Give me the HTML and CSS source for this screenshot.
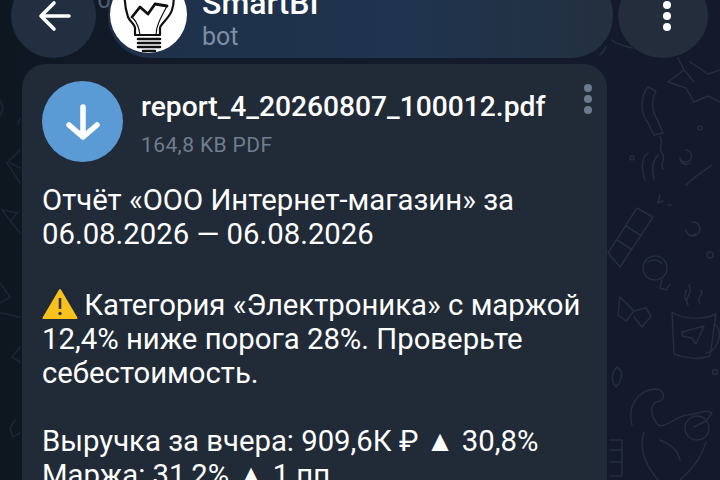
FILE: index.html
```html
<!DOCTYPE html>
<html lang="en">
<head>
  <meta charset="UTF-8" />
  <title>SmartBI</title>
  <link rel="stylesheet" href="styles.css">
</head>
<body>
  <!-- chat wallpaper doodles -->
  <svg class="wallpaper" width="720" height="480" viewBox="0 0 720 480" fill="none" stroke="#262d40" stroke-width="1.5" stroke-linecap="round" stroke-linejoin="round">
    <path d="M612 40c4 4 12 6 20 8M600 55c4-3 4-6 6-8" />
    <path d="M678 58l6 12-16 12 18 6 8 14 14-6 12 6M690 62l18 12 12-4M684 70l10 12" />
    <path d="M648 87c-8 10-8 26 0 36l6 12 9-2-6-14c-5-8-6-18-1-28z" />
    <path d="M660 137c5 6-3 10 2 16s-3 10 1 16" />
    <path d="M648 153c-8 6-6 18-3 27M658 155c-6 6-6 16-4 24" />
    <path d="M686 150a6 6 0 1 1-6 8c0 5 6 8 10 5" />
    <circle cx="700" cy="128" r="2" />
    <circle cx="632" cy="158" r="2" />
    <path d="M712 165c-8 6-16 10-26 20" />
    <path d="M608 253l29-45 16 9-33 50zM617 240l14 9M626 226l14 9" />
    <path d="M660 195l-2 8 5-2M668 205h3" />
    <path d="M692 222a7 7 0 1 1-6 8c0 5 8 7 10 3" />
    <circle cx="710" cy="255" r="3" />
    <circle cx="655" cy="268" r="12" />
    <path d="M662 280l-2 8 6 2 4-6M648 262c4-3 10-3 14 2" />
    <path d="M620 297l14 14-8 10-8-6zM634 311l12-3 5 8-9 11-8-10" />
    <path d="M672 312c12 8 30 8 44 2l-6 42c-10 4-26 2-36-2zM714 325c8 0 8 25-8 28" />
    <path d="M682 332l22-6-8 18-4-6-10-2z" />
    <path d="M688 305c-5-8 6-10 1-20M700 303c-5-6 5-8 1-13M686 300c-3-4 0-7 0-10" />
    <path d="M617 367c-6 6-6 14-1 20 6-6 8-16 1-20z" />
    <circle cx="715" cy="372" r="2.500" />
    <path d="M632 425c-5-18 5-34 22-36 10 0 12 8 6 12-12 2-10 14-2 24 8 4 18-10 30-10 14-2 18-6 24-2l-6 8-12 6" />
    <circle cx="697" cy="428" r="12" />
    <path d="M644 432c-6 18 4 36 14 48M706 442c-4 14-12 26-26 38M660 440c10 4 18 10 20 20" />
    <path d="M610 440h12v36h-12M610 450h12M610 462h12" />
    <path d="M20 150 7 163l13 20M20 168 10 163" stroke="#1d2632" />
    <path d="M2 210l18 23M2 210l16 3M10 222l8-10" stroke="#1d2632" />
    <path d="M0 283l10 14-10 6M0 313c8 0 14 4 20 4M20 347l-8 10 8 5M15 420l-5 8 3 9 7-4" stroke="#1d2632" />
    <path d="M0 100l3 8-3 8M20 118l-2 6" stroke="#1d2632" />
  </svg>

  <header class="topbar">
    <button class="round-btn" aria-label="Back">
      <svg width="36" height="36" viewBox="0 0 36 36" fill="none" stroke="#fff" stroke-width="3.600" stroke-linecap="round" stroke-linejoin="round">
        <path d="M33 18H5M18 5 5 18l13 13" />
      </svg>
    </button>
    <span class="behind-count">0</span>
    <div class="chat-pill">
      <div class="avatar">
        <svg width="77" height="77" viewBox="0 0 77 77" fill="none" stroke="#111" stroke-width="2.200" stroke-linecap="round" stroke-linejoin="round">
          <path d="M15 14c-1 10 0 18 3 27 2 5 7 7 7 11v7h25v-7c0-4 9-9 12-18 2-6 2-14 1-20" />
          <path d="M22 41l8-10 8 7 7-10 12 2" stroke-width="2.800" />
          <path d="M30 59c-1-6-2-12-8-18M46 59c0-8 3-14 11-29" stroke-width="1.200" />
          <path d="M28 63h22M28 67h22M28 71h22M33 75h12" stroke-width="2.600" />
        </svg>
      </div>
      <div class="chat-title">
        <span class="chat-name">SmartBI</span>
        <span class="chat-status">bot</span>
      </div>
    </div>
    <button class="round-btn round-btn-more" aria-label="More">
      <span class="dots"><i></i><i></i><i></i></span>
    </button>
  </header>

  <main class="bubble">
    <div class="file-row">
      <div class="download">
        <svg width="36" height="36" viewBox="0 0 36 36" fill="none" stroke="#fff" stroke-width="5.500" stroke-linecap="round" stroke-linejoin="round">
          <path d="M18 3v30M4 21l14 12 14-12" />
        </svg>
      </div>
      <div class="file-info">
        <div class="file-name">report_4_20260807_100012.pdf</div>
        <div class="file-size">164,8 KB PDF</div>
      </div>
      <span class="dots dots-file"><i></i><i></i><i></i></span>
    </div>
    <p class="msg">Отчёт «ООО Интернет-магазин» за<br>06.08.2026 — 06.08.2026</p>
    <p class="msg msg-alert"><svg class="warn" width="36" height="32" viewBox="0 0 36 32"><path d="M18 2 34.500 30H1.500z" fill="#f9c21d" stroke="#f9c21d" stroke-width="2" stroke-linejoin="round"/><path d="M18 10v11" stroke="#333" stroke-width="2.600"/><circle cx="18" cy="25.500" r="1.700" fill="#333"/></svg> Категория «Электроника» с маржой<br>12,4% ниже порога 28%. Проверьте<br>себестоимость.</p>
    <p class="msg">Выручка за вчера: 909,6К ₽ ▲ 30,8%<br>Маржа: 31,2% ▲ 1 пп</p>
  </main>
</body>
</html>
```

FILE: styles.css
```css
* {
  box-sizing: border-box;
  margin: 0;
  padding: 0;
}

html, body {
  width: 720px;
  height: 480px;
  overflow: hidden;
}

body {
  position: relative;
  background: linear-gradient(to right, #0e1620, #121a28 15%, #141a2c);
  color: #fff;
  font-family: Roboto, "Noto Sans", sans-serif;
}

.wallpaper {
  position: absolute;
  top: 0;
  left: 0;
}

.topbar {
  position: relative;
  display: flex;
  gap: 12px;
  height: 85px;
  margin: -27px 12px 0 11px;
}

.round-btn {
  flex: none;
  display: flex;
  align-items: center;
  justify-content: center;
  width: 85px;
  height: 85px;
  border: none;
  border-radius: 50%;
  background: #222f41;
}

.round-btn-more {
  width: 90px;
  margin-left: -7px;
  background: #232d3b;
}

.behind-count {
  position: absolute;
  top: 13px;
  left: 86px;
  font-size: 25px;
  line-height: 28px;
  color: #4f5d6e;
}

.chat-pill {
  position: relative;
  flex: 1;
  display: flex;
  align-items: center;
  gap: 15px;
  padding: 0 2px;
  border-radius: 42px;
  background: linear-gradient(to right, #1e3049, #20344f 60%, #23303f);
}

.avatar {
  flex: none;
  width: 77px;
  height: 77px;
  margin-bottom: 2px;
  border-radius: 50%;
  background: #fff;
  overflow: hidden;
}

.chat-title {
  display: flex;
  flex-direction: column;
  gap: 3px;
  margin-top: 5px;
}

.chat-name {
  font-size: 32px;
  line-height: 34px;
  font-weight: 500;
}

.chat-status {
  font-size: 25px;
  line-height: 28px;
  color: #7c8ea3;
}

.bubble {
  position: relative;
  width: 585px;
  height: 440px;
  margin: 6px 0 0 22px;
  padding: 17px 15px 0 20px;
  border-radius: 24px 24px 0 0;
  background: #212b37;
}

.file-row {
  display: flex;
  gap: 18px;
  margin-bottom: 21px;
}

.download {
  flex: none;
  display: flex;
  align-items: center;
  justify-content: center;
  width: 81px;
  height: 81px;
  border-radius: 50%;
  background: #5b9bd5;
}

.file-info {
  flex: 1;
  padding-top: 10px;
}

.file-name {
  font-size: 28.2px;
  line-height: 32px;
  font-weight: 500;
}

.file-size {
  margin-top: 10px;
  font-size: 21px;
  line-height: 24px;
  letter-spacing: 0.4px;
  color: #6f7e8e;
}

.dots {
  display: flex;
  flex-direction: column;
  gap: 3px;
}

.dots i {
  width: 8px;
  height: 8px;
  border-radius: 50%;
  background: #fff;
}

.round-btn-more .dots {
  margin: 1px 0 0 8px;
}

.dots-file {
  margin-top: 3px;
}

.dots-file i {
  background: #6b7b8d;
}

.msg {
  margin-bottom: 34px;
  font-size: 29.3px;
  line-height: 34px;
}

.msg-alert {
  padding-top: 3px;
}

.warn {
  margin-right: -1px;
  vertical-align: -5px;
}
```
